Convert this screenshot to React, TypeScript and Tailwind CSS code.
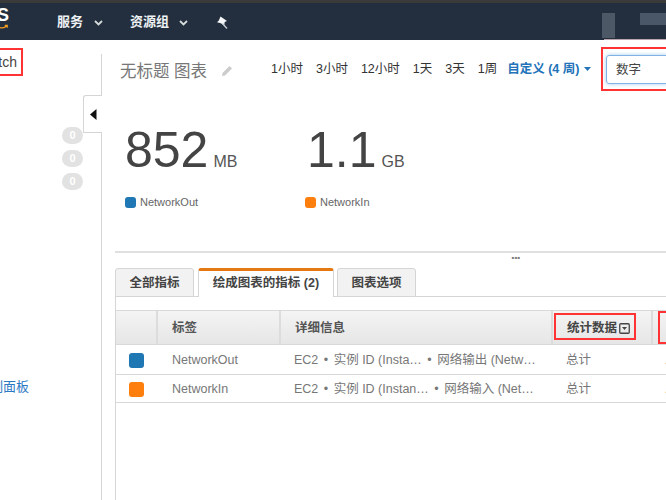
import React from "react";

const font = "font-['Liberation_Sans','Noto_Sans_CJK_SC',sans-serif]";

function Chevron() {
  return (
    <svg width="9" height="6" viewBox="0 0 9 6" className="mt-[3px]">
      <path d="M1 1l3.5 3.5L8 1" fill="none" stroke="#d5dbdb" strokeWidth="1.8" />
    </svg>
  );
}

function Nav() {
  return (
    <div className="h-10 shrink-0 border-t-[3px] border-[#3a3a38] bg-[#232f3e] flex items-center relative overflow-hidden">
      <div className="w-[57px] shrink-0 relative h-full">
        <span className="absolute left-[-3px] top-[2px] text-[18px] font-bold text-white leading-[20px]">S</span>
        <svg className="absolute left-0 top-[20px]" width="8" height="7" viewBox="0 0 8 7">
          <path d="M0 4.500C3 5.500 5 4.500 6.500 3M4.800 2.300h2.400v2.400" fill="none" stroke="#f39c1f" strokeWidth="1.300" />
        </svg>
      </div>
      <span className="text-[13px] font-bold text-[#eef1f4] w-[27px] whitespace-nowrap">服务</span>
      <span className="ml-[10px]"><Chevron /></span>
      <span className="ml-[27px] text-[13px] font-bold text-[#eef1f4] whitespace-nowrap">资源组</span>
      <span className="ml-[10px]"><Chevron /></span>
      <svg className="ml-[28px] mt-[2px]" width="12" height="13" viewBox="0 0 12 13">
        <path d="M4.500 0.500l6.500 4.500-2.300 1-.5 3.500-3.400-2.300L1 6.300 2.800 4.600z" fill="#f4f6f8" />
        <path d="M6.500 7.500l4.500 5" stroke="#c9ced4" strokeWidth="1.300" />
      </svg>
      <div className="absolute left-[602px] top-[10px] w-[13px] h-[25px] bg-[#4d5866]" />
      <div className="absolute left-[640px] top-[10px] w-[26px] h-[12px] bg-[#4a5768]" />
      <div className="absolute left-[604px] right-0 bottom-0 h-px bg-[#b9a5ad]" />
    </div>
  );
}

function Sidebar() {
  return (
    <div className="w-[102px] shrink-0 flex flex-col relative">
      <div className="w-[23px] h-[28px] mt-2 border-2 border-l-0 border-[#f33] flex items-center justify-end pr-[4px] text-[14px] text-[#444] overflow-hidden">
        tch
      </div>
      <div className="ml-[62px] mt-[51px] flex flex-col gap-[6px]">
        {[0, 1, 2].map((i) => (
          <div key={i} className="w-[21px] h-[17px] rounded-full bg-[#e2e2e2] text-white text-[11px] font-bold leading-[17px] text-center">0</div>
        ))}
      </div>
      <a className="mt-[187px] text-[13px] text-[#2b78c5] whitespace-nowrap self-start -ml-[10px]">制面板</a>
      <div className="absolute right-0 top-[14px] bottom-0 w-px bg-[#d5d5d5]" />
      <div className="absolute left-[83px] top-[55px] w-[19px] h-[38px] bg-white border-l border-b border-t border-[#d5d5d5] rounded-tl-[3px] flex items-center justify-center z-10">
        <svg width="7" height="11" viewBox="0 0 7 11"><path d="M6.500 0v11L0 5.500z" fill="#111" /></svg>
      </div>
    </div>
  );
}

const ranges = ["1小时", "3小时", "12小时", "1天", "3天", "1周"];

function Header() {
  return (
    <div className="flex items-start h-[52px]">
      <div className="w-[151px] ml-[18px] shrink-0 flex items-center gap-[14px] mt-[19px]">
        <span className="text-[16.500px] text-[#777] whitespace-nowrap leading-[24px]">无标题 图表</span>
        <svg width="12" height="12" viewBox="0 0 12 12"><path d="M8.500 1L11 3.500 4 10.500 1 11l.5-3z" fill="#cccccc" /></svg>
      </div>
      <div className="flex items-center text-[12.500px] text-[#333] mt-[20px] h-[18px] whitespace-nowrap gap-[13px]">
        {ranges.map((r) => (
          <span key={r}>{r}</span>
        ))}
      </div>
      <div className="flex items-center text-[12.500px] font-bold text-[#2273b9] ml-[10px] mt-[20px] h-[18px] whitespace-nowrap">
        <span>自定义 (4 周)</span>
        <svg className="ml-[5px]" width="7" height="4" viewBox="0 0 7 4"><path d="M0 0h7L3.500 4z" fill="#2273b9" /></svg>
      </div>
    </div>
  );
}

function Metric({ value, unit, color, label, valueClass, unitClass }: { value: string; unit: string; color: string; label: string; valueClass: string; unitClass: string }) {
  return (
    <div className="w-[180px] shrink-0">
      <div className="flex items-baseline h-[54px]">
        <span className={`text-[50px] leading-[54px] text-[#444] ${valueClass}`}>{value}</span>
        <span className={`text-[16px] text-[#555] ${unitClass}`}>{unit}</span>
      </div>
      <div className="flex items-center mt-[17px] h-4">
        <span className={`w-[11px] h-[11px] rounded-[3px] ${color}`} />
        <span className="ml-1 text-[11px] text-[#666]">{label}</span>
      </div>
    </div>
  );
}

const rows = [
  { color: "bg-[#1f77b4]", label: "NetworkOut", a: "实例 ID (Insta…", b: "网络输出 (Netw…", h: "h-[30px]", pad: "pt-px" },
  { color: "bg-[#ff7f0e]", label: "NetworkIn", a: "实例 ID (Instan…", b: "网络输入 (Net…", h: "h-[28px]", pad: "pt-[2px]" },
];

function Tabs() {
  return (
    <div className="flex items-end h-[29px] ml-[13px] border-b border-[#d5d5d5] text-[12.500px] font-bold text-[#444]">
      <div className="w-[79px] h-[29px] -mb-px pt-px border border-[#d5d5d5] rounded-t-[3px] bg-[#f2f2f2] flex items-center justify-center whitespace-nowrap">全部指标</div>
      <div className="ml-[4px] w-[136px] h-[29px] -mb-px border-x border-[#d5d5d5] border-t-[3px] border-t-[#e47911] rounded-t-[3px] bg-white flex items-center justify-center pb-px whitespace-nowrap">绘成图表的指标 (2)</div>
      <div className="ml-[3px] w-[79px] h-[29px] -mb-px pt-px border border-[#d5d5d5] rounded-t-[3px] bg-[#f2f2f2] flex items-center justify-center whitespace-nowrap">图表选项</div>
    </div>
  );
}

function MetricTable() {
  return (
    <div className="ml-[13px] flex-1 border-l border-[#d5d5d5] pt-[13px]">
      <div className="flex h-[35px] border-y border-[#d9d9d9] bg-gradient-to-b from-[#f4f4f4] to-[#e6e6e6] text-[12.500px] font-bold text-[#555] items-stretch">
        <div className="w-[42px] shrink-0 border-r-2 border-[#dcdcdc]" />
        <div className="w-[123px] shrink-0 border-r-2 border-[#dcdcdc] pl-[14px] pt-px flex items-center">标签</div>
        <div className="w-[272px] shrink-0 border-r-2 border-[#dcdcdc] pl-[14px] pt-px flex items-center">详细信息</div>
        <div className="w-[100px] shrink-0 border-r-2 border-[#dcdcdc] relative flex items-center pl-[14px] pt-px">
          <span className="whitespace-nowrap text-[#444]">统计数据</span>
          <svg className="ml-[2px]" width="11" height="11" viewBox="0 0 11 11">
            <rect x="0.750" y="0.750" width="9.500" height="9.500" rx="1" fill="none" stroke="#444" strokeWidth="1.300" />
            <path d="M3 4h5L5.500 7z" fill="#444" />
          </svg>
          <div className="absolute left-px top-[2px] w-[82px] h-[27px] border-2 border-[#f33]" />
        </div>
        <div className="flex-1 relative">
          <div className="absolute left-[5px] top-0 w-[30px] h-[33px] border-2 border-[#f33]" />
        </div>
      </div>
      {rows.map((r) => (
        <div key={r.label} className={`flex items-center ${r.h} ${r.pad} border-b border-[#d9d9d9] text-[12.500px] text-[#777]`}>
          <div className="w-[42px] shrink-0 pl-[13px] flex items-center">
            <span className={`w-[15px] h-[15px] rounded-[3px] ${r.color}`} />
          </div>
          <div className="w-[122px] shrink-0 pl-[14px]">{r.label}</div>
          <div className="w-[272px] shrink-0 pl-[14px] whitespace-nowrap">
            EC2<span className="mx-[2px]"> • </span>{r.a}<span className="mx-[2px]"> • </span>{r.b}
          </div>
          <div className="w-[100px] shrink-0 pl-[14px]">总计</div>
          <div className="pl-[13px]">总</div>
        </div>
      ))}
    </div>
  );
}

export default function App() {
  return (
    <div className={`w-[666px] h-[500px] overflow-hidden bg-white flex flex-col ${font}`}>
      <Nav />
      <div className="flex-1 flex min-h-0 relative">
        <Sidebar />
        <div className="flex-1 min-w-0 flex flex-col">
          <Header />
          <div className="flex pl-[23px] pt-[31px] h-[159px]">
            <Metric value="852" unit="MB" color="bg-[#1f77b4]" label="NetworkOut" valueClass="" unitClass="ml-[5px]" />
            <Metric value="1.1" unit="GB" color="bg-[#ff7f0e]" label="NetworkIn" valueClass="ml-[2px]" unitClass="ml-[5px]" />
          </div>
          <div className="ml-[13px] h-[2px] bg-[#e0e0e0]" />
          <div className="flex justify-end pr-[146px] h-[15px] pt-px">
            <span className="text-[8px] leading-[8px] font-bold text-[#777]">•••</span>
          </div>
          <Tabs />
          <MetricTable />
        </div>
        <div className="absolute left-[601px] top-[7px] w-[70px] h-[44px] border-2 border-[#f33] bg-white flex items-center pl-[3px]">
          <div className="w-full h-[29px] border border-[#7fb2e5] rounded-[3px] shadow-[0_0_4px_#a8cdf0] flex items-center pl-[9px] pt-[2px] text-[12.500px] text-[#444]">数字</div>
        </div>
      </div>
    </div>
  );
}
